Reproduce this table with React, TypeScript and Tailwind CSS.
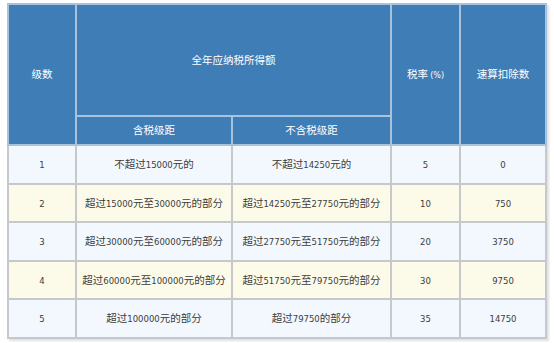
const rows = [
  { level: "1", incl: "不超过15000元的", excl: "不超过14250元的", rate: "5", deduct: "0" },
  { level: "2", incl: "超过15000元至30000元的部分", excl: "超过14250元至27750元的部分", rate: "10", deduct: "750" },
  { level: "3", incl: "超过30000元至60000元的部分", excl: "超过27750元至51750元的部分", rate: "20", deduct: "3750" },
  { level: "4", incl: "超过60000元至100000元的部分", excl: "超过51750元至79750元的部分", rate: "30", deduct: "9750" },
  { level: "5", incl: "超过100000元的部分", excl: "超过79750的部分", rate: "35", deduct: "14750" },
];

// digits are set smaller and in a latin face, like the original page
function Mixed({ text }: { text: string }) {
  const parts = text.split(/(\d+)/);
  return (
    <>
      {parts.map((p, i) =>
        /^\d+$/.test(p) ? (
          <span key={i} className="font-['DejaVu_Sans',sans-serif] text-[8.5px]">
            {p}
          </span>
        ) : (
          <span key={i}>{p}</span>
        )
      )}
    </>
  );
}

export default function App() {
  const th = "border-2 border-[#a9c3dc] bg-[#3f7db7] text-white font-normal text-center align-middle";
  const td = "border-2 border-[#c6c9cc] text-center align-middle text-[#3c3c3c]";

  return (
    <div className="w-[554px] h-[343px] bg-white pt-[3px] pl-[7px]">
      <table className="table-fixed border-collapse w-[538px] text-[10.5px] leading-none font-['Noto_Sans_CJK_SC',sans-serif] shadow-[2px_2px_2px_rgba(0,0,0,0.12)]">
        <colgroup>
          <col className="w-[68px]" />
          <col className="w-[156px]" />
          <col className="w-[159px]" />
          <col className="w-[69px]" />
          <col className="w-[86px]" />
        </colgroup>
        <thead>
          <tr className="h-[112px]">
            <th rowSpan={2} className={th}>级数</th>
            <th colSpan={2} className={th}>全年应纳税所得额</th>
            <th rowSpan={2} className={th}>
              税率 <span className="font-['DejaVu_Sans',sans-serif] text-[8px]">(%)</span>
            </th>
            <th rowSpan={2} className={th}>速算扣除数</th>
          </tr>
          <tr className="h-[29px]">
            <th className={th}>含税级距</th>
            <th className={th}>不含税级距</th>
          </tr>
        </thead>
        <tbody>
          {rows.map((r, i) => (
            <tr key={r.level} className={i % 2 === 1 ? "h-[38.6px] bg-[#fcfbe9]" : "h-[38.6px] bg-[#f2f8fd]"}>
              <td className={td}><Mixed text={r.level} /></td>
              <td className={td}><Mixed text={r.incl} /></td>
              <td className={td}><Mixed text={r.excl} /></td>
              <td className={td}><Mixed text={r.rate} /></td>
              <td className={td}><Mixed text={r.deduct} /></td>
            </tr>
          ))}
        </tbody>
      </table>
    </div>
  );
}
